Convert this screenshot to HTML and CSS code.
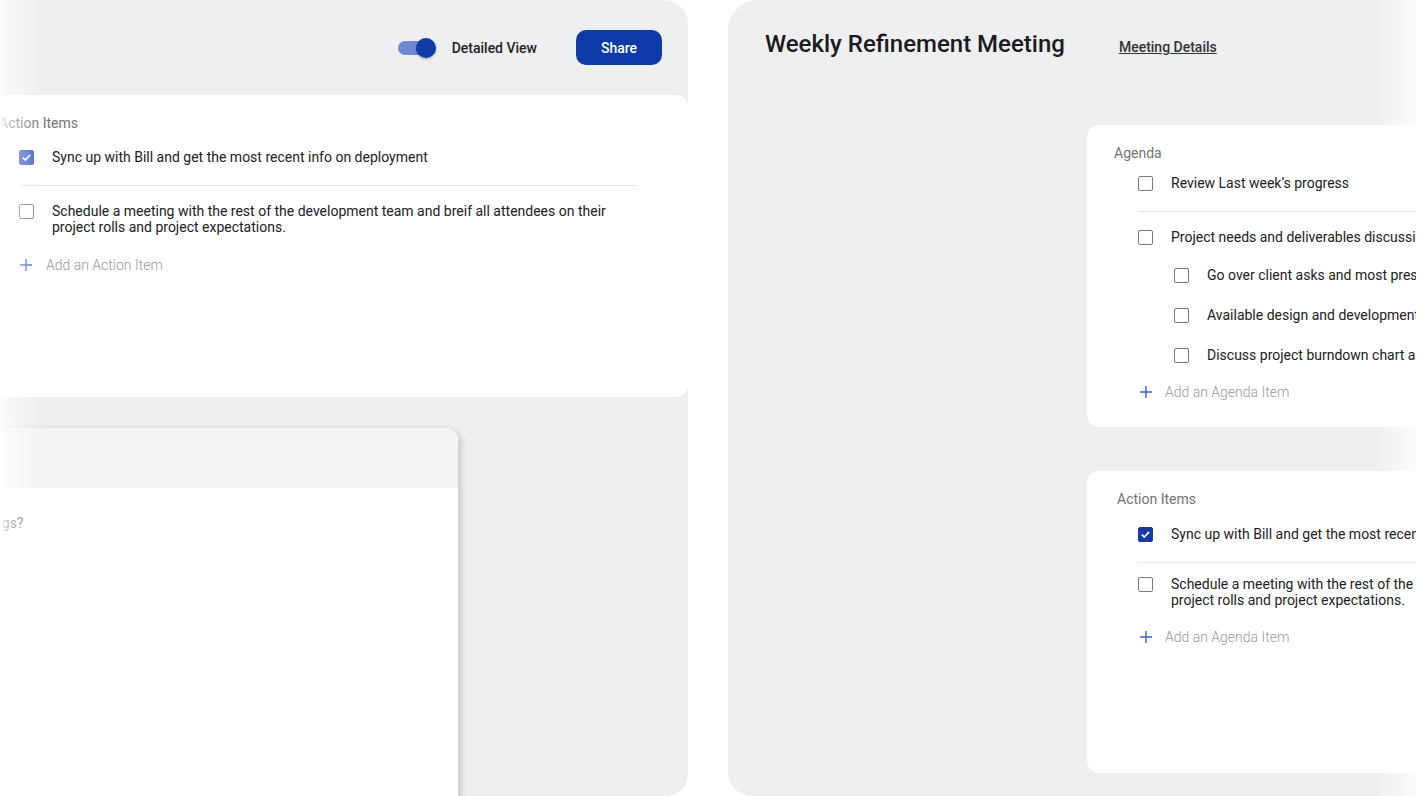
FILE: index.html
```html
<!DOCTYPE html>
<html lang="en">
<head>
<meta charset="UTF-8">
<meta name="viewport" content="width=device-width, initial-scale=1.0">
<title>Weekly Refinement Meeting</title>
<link rel="stylesheet" href="styles.css">
</head>
<body>
<div class="stage">
    <section class="panel panel-left">
        <header class="toolbar">
            <div class="toggle"><span class="toggle-track"><span class="toggle-thumb"></span></span></div>
            <span class="toggle-label">Detailed View</span>
            <button type="button" class="btn-share">Share</button>
        </header>
        <div class="card card-wide">
            <div class="card-label">Action Items</div>
            <ul class="checklist">
                <li class="check-row divided">
                    <span class="box checked soft"><svg viewBox="0 0 16 16"><path d="M3.5 8.2l3 3 6-6.4"/></svg></span>
                    <span>Sync up with Bill and get the most recent info on deployment</span>
                </li>
                <li class="check-row">
                    <span class="box"></span>
                    <span>Schedule a meeting with the rest of the development team and breif all attendees on their project rolls and project expectations.</span>
                </li>
            </ul>
            <div class="add-row"><svg class="plus" viewBox="0 0 12 12"><path d="M6 0v12M0 6h12"/></svg>Add an Action Item</div>
        </div>
        <div class="notes">
            <div class="notes-head"></div>
            <div class="notes-body">Any questions for the meetings?</div>
        </div>
    </section>

    <section class="panel panel-right">
        <header class="meeting-head">
            <h1>Weekly Refinement Meeting</h1>
            <a href="#" class="meeting-link">Meeting Details</a>
        </header>
        <div class="card-stack">
            <div class="card">
                <div class="card-label">Agenda</div>
                <ul class="checklist tight">
                    <li class="check-row divided">
                        <span class="box"></span>
                        <span>Review Last week’s progress</span>
                    </li>
                    <li class="check-row">
                        <span class="box"></span>
                        <span>Project needs and deliverables discussion</span>
                    </li>
                </ul>
                <ul class="sublist">
                    <li class="check-row"><span class="box"></span><span>Go over client asks and most pressing needs</span></li>
                    <li class="check-row"><span class="box"></span><span>Available design and development resources</span></li>
                    <li class="check-row"><span class="box"></span><span>Discuss project burndown chart and timeline</span></li>
                </ul>
                <div class="add-row"><svg class="plus" viewBox="0 0 12 12"><path d="M6 0v12M0 6h12"/></svg>Add an Agenda Item</div>
            </div>
            <div class="card">
                <div class="card-label shifted">Action Items</div>
                <ul class="checklist">
                    <li class="check-row divided light">
                        <span class="box checked"><svg viewBox="0 0 16 16"><path d="M3.5 8.2l3 3 6-6.4"/></svg></span>
                        <span>Sync up with Bill and get the most recent info on deployment</span>
                    </li>
                    <li class="check-row">
                        <span class="box"></span>
                        <span>Schedule a meeting with the rest of the development team and breif all attendees on their project rolls and project expectations.</span>
                    </li>
                </ul>
                <div class="add-row"><svg class="plus" viewBox="0 0 12 12"><path d="M6 0v12M0 6h12"/></svg>Add an Agenda Item</div>
            </div>
        </div>
    </section>
</div>
</body>
</html>
```

FILE: styles.css
```css
* {
    margin: 0;
    padding: 0;
    box-sizing: border-box;
    font-family: Roboto, 'Liberation Sans', sans-serif;
}
body {
    background-color: #ffffff;
    color: #212121;
    overflow: hidden;
}
.stage {
    position: relative;
    display: flex;
    gap: 40px;
    height: 796px;
}
/* white fade on the left edge */
.stage::after {
    content: '';
    position: absolute;
    top: 0;
    left: 0;
    bottom: 0;
    width: 44px;
    background: linear-gradient(90deg, #ffffff 0, rgba(255, 255, 255, 0.55) 8px, rgba(255, 255, 255, 0) 44px);
    pointer-events: none;
}
.panel {
    height: 796px;
    background-color: #eeeff1;
    overflow: hidden;
    flex-shrink: 0;
}
.panel-left {
    width: 728px;
    margin-left: -40px;
    border-radius: 0 24px 22px 0;
}
.panel-right {
    width: 688px;
    border-radius: 30px 0 0 24px;
    background: linear-gradient(90deg, #eeeff1 calc(100% - 44px), #fbfbfb 100%);
}

/* left toolbar */
.toolbar {
    height: 95px;
    display: flex;
    align-items: center;
    justify-content: flex-end;
    padding-right: 26px;
}
.toggle-track {
    width: 32px;
    height: 14px;
    border-radius: 7px;
    background-color: #7189d3;
    display: flex;
    align-items: center;
    justify-content: flex-end;
}
.toggle-thumb {
    width: 20px;
    height: 20px;
    border-radius: 50%;
    margin-right: -6px;
    background-color: #0f3aa7;
    box-shadow: 0 1px 3px rgba(0, 0, 0, 0.3);
}
.toggle {
    width: 38px;
    margin-top: 1px;
}
.toggle-label {
    margin-left: 16px;
    margin-top: 1px;
    font-size: 14px;
    font-weight: 500;
    color: #222222;
}
.btn-share {
    margin-left: 39px;
    width: 86px;
    height: 35px;
    border: none;
    border-radius: 10px;
    background-color: #0e3aa8;
    color: #ffffff;
    font-size: 14px;
    font-weight: 500;
    cursor: pointer;
}

/* cards */
.card {
    height: 302px;
    background-color: #ffffff;
    border-radius: 12px;
    padding: 20px 51px 0 27px;
}
.card-wide {
    padding: 20px 51px 0 39px;
    border-radius: 0 12px 12px 0;
}
.card-label {
    font-size: 14px;
    line-height: 16px;
    color: #737373;
}
.card-label.shifted {
    padding-left: 3px;
    line-height: 17px;
}
.checklist {
    list-style: none;
    margin-top: 18px;
    padding-left: 24px;
}
.card-wide .checklist {
    padding-left: 20px;
}
.checklist.tight {
    margin-top: 14px;
}
.check-row {
    display: flex;
    align-items: flex-start;
    gap: 18px;
    font-size: 14px;
    line-height: 16px;
    color: #212121;
}
.check-row.divided {
    padding-bottom: 20px;
    border-bottom: 1px solid #e6e6e6;
    margin-bottom: 17px;
}
.check-row.light {
    border-bottom-color: #ececec;
    margin-bottom: 13px;
}
.sublist {
    list-style: none;
    margin-top: 22px;
    padding-left: 60px;
    display: flex;
    flex-direction: column;
    gap: 24px;
    white-space: nowrap;
}
.box {
    flex-shrink: 0;
    width: 15px;
    height: 15px;
    margin-top: 0.5px;
    border: 1.6px solid #7a7a7a;
    border-radius: 2px;
    display: flex;
    align-items: center;
    justify-content: center;
}
.box svg {
    width: 13px;
    height: 13px;
    fill: none;
    stroke: #ffffff;
    stroke-width: 2;
}
.box.checked {
    background-color: #1738a6;
    border-color: #1738a6;
}
.box.soft {
    background-color: #3f5dc2;
    border-color: #3f5dc2;
}
.add-row {
    margin-top: 21px;
    padding-left: 26px;
    display: flex;
    align-items: center;
    gap: 13px;
    font-size: 14px;
    line-height: 16px;
    font-weight: 300;
    color: #9a9a9a;
}
.card-wide .add-row {
    margin-top: 22px;
    padding-left: 21px;
    gap: 14px;
}
.plus {
    width: 12px;
    height: 12px;
    fill: none;
    stroke: #3f5fc5;
    stroke-width: 1.4;
}

/* lower left notes card */
.notes {
    margin-top: 31px;
    margin-left: -174px;
    width: 672px;
    height: 420px;
    background-color: #ffffff;
    border-radius: 0 12px 0 0;
    box-shadow: 3px 2px 7px rgba(0, 0, 0, 0.16);
    overflow: hidden;
}
.notes-head {
    height: 60px;
    background-color: #f4f4f5;
}
.notes-body {
    padding: 27px 0 0 37px;
    font-size: 14px;
    line-height: 16px;
    font-weight: 400;
    color: #6f6f6f;
}

/* right panel */
.meeting-head {
    display: flex;
    align-items: baseline;
    padding: 30px 0 0 37px;
    height: 125px;
}
.meeting-head h1 {
    font-size: 24px;
    line-height: 28px;
    font-weight: 500;
    color: #1b1b1b;
}
.meeting-link {
    margin-left: 54px;
    font-size: 14px;
    font-weight: 500;
    color: #333333;
    text-decoration: underline;
}
.card-stack {
    margin-left: 359px;
    width: 720px;
    display: flex;
    flex-direction: column;
    gap: 44px;
}
```
